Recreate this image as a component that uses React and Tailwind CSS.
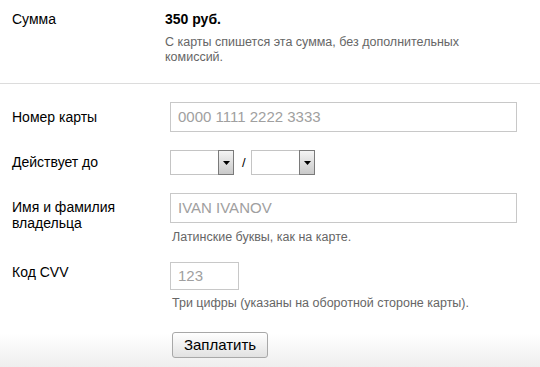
import React from "react";

const font = { fontFamily: '"Liberation Sans", Arial, sans-serif' };

function Select() {
  return (
    <div className="flex h-[25px] w-[64px] border border-[#c4c4c4] bg-white">
      <div className="flex-1" />
      <div className="flex w-[16px] -my-px -mr-px items-center justify-center border border-[#7a7a7a] bg-gradient-to-b from-[#f4f4f4] to-[#c9c9c9]">
        <svg width="7" height="4" viewBox="0 0 7 4">
          <path d="M0 0h7L3.5 4z" fill="#000" />
        </svg>
      </div>
    </div>
  );
}

export default function App() {
  return (
    <div
      className="relative w-[540px] h-[367px] overflow-hidden bg-gradient-to-b from-white from-[91%] to-[#eeeeee] text-[14px] leading-[16px] text-black"
      style={font}
    >
      <div className="flex pt-[11px] pb-[18px]">
        <div className="w-[165px] pl-[12px]">Сумма</div>
        <div>
          <div className="font-bold">350 руб.</div>
          <div className="mt-[8px] w-[345px] text-[12.5px] leading-[15px] text-[#666]">
            С карты спишется эта сумма, без дополнительных комиссий.
          </div>
        </div>
      </div>
      <div className="h-px bg-[#dcdcdc]" />

      <div className="mt-[18px] flex">
        <div className="w-[170px] pl-[12px] pt-[7px]">Номер карты</div>
        <div className="flex h-[30px] w-[347px] items-center border border-[#c8c8c8] bg-white pl-[7px] text-[15px] text-[#a0a0a0]">
          0000 1111 2222 3333
        </div>
      </div>

      <div className="mt-[18px] flex">
        <div className="w-[170px] pl-[12px] pt-[4px]">Действует до</div>
        <div className="flex items-center">
          <Select />
          <span className="ml-[8px] mr-[4px] w-[5px] text-[13px]">/</span>
          <Select />
        </div>
      </div>

      <div className="mt-[18px] flex">
        <div className="w-[170px] pl-[12px] pt-[6px]">
          Имя и фамилия
          <br />
          владельца
        </div>
        <div>
          <div className="flex h-[30px] w-[347px] items-center border border-[#c8c8c8] bg-white pl-[7px] text-[15px] text-[#a0a0a0]">
            IVAN IVANOV
          </div>
          <div className="mt-[6px] pl-[2px] text-[12.5px] leading-[16px] text-[#666]">
            Латинские буквы, как на карте.
          </div>
        </div>
      </div>

      <div className="mt-[17px] flex">
        <div className="w-[170px] pl-[12px] pt-[2px]">Код CVV</div>
        <div>
          <div className="flex h-[28px] w-[69px] items-center border border-[#c8c8c8] bg-white pl-[7px] text-[15px] text-[#a0a0a0]">
            123
          </div>
          <div className="mt-[5px] pl-[2px] text-[12.5px] leading-[16px] text-[#666]">
            Три цифры (указаны на оборотной стороне карты).
          </div>
        </div>
      </div>

      <div className="mt-[21px] pl-[172px]">
        <button
          className="h-[26px] w-[96px] rounded-[3px] border border-[#a8a8a8] bg-gradient-to-b from-white to-[#e2e2e2] text-[15px] text-black"
          style={font}
        >
          Заплатить
        </button>
      </div>
    </div>
  );
}
